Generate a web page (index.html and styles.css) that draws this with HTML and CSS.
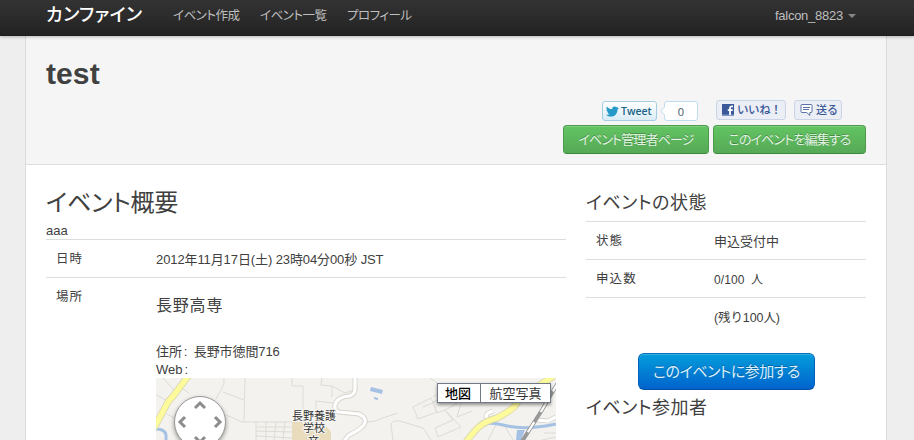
FILE: index.html
```html
<!DOCTYPE html>
<html lang="ja">
<head>
<meta charset="utf-8">
<title>カンファイン</title>
<link rel="stylesheet" href="styles.css">
</head>
<body>
<nav class="navbar">
  <a class="brand">カンファイン</a>
  <a class="nav-link nav-create">イベント作成</a>
  <a class="nav-link nav-list">イベント一覧</a>
  <a class="nav-link nav-profile">プロフィール</a>
  <a class="nav-user">falcon_8823<span class="caret"></span></a>
</nav>
<div class="content">
  <header class="page-header">
    <h1>test</h1>
    <div class="social">
      <a class="tweet">
        <svg width="13" height="11" viewBox="0 0 13 11"><path fill="#2599c8" d="M0 8.7C2 9 3 8.600 3.700 8 2.300 7.900 1.600 7 1.500 6.200h1C1 5.700.4 4.700.4 3.500l1.100.3C.3 2.800.3 1.500.9.500 2.300 2.200 4 3.200 6.200 3.300 5.900 1.600 7 .4 8.500.4c.8 0 1.500.3 2 .9l1.700-.6-.9 1.400 1.700-.2-1.500 1.500C11.500 8 8.500 10.600 4.700 10.600 3 10.600 1.300 10 0 8.700z"/></svg>
        <span>Tweet</span>
      </a>
      <span class="count"><svg class="count-tip" width="5" height="10" viewBox="0 0 5 10"><path d="M5 .5.7 5 5 9.500" fill="#fff" stroke="#bddcee"/></svg>0</span>
      <a class="fb like">
        <svg width="12" height="12" viewBox="0 0 12 12"><path fill="#3b5998" d="M0 0h12v12H0z"/><path fill="#8298c7" d="M0 10.500h12V12H0z"/><path fill="none" stroke="#fff" stroke-width="1.800" d="M11 2.400h-1Q8 2.200 8 4.600V11M5.800 6.200h5"/></svg>
        <span>いいね！</span>
      </a>
      <a class="fb send">
        <svg width="13" height="13" viewBox="0 0 13 13"><path fill="#fff" stroke="#5872a7" d="M2 .5h9q1 0 1 1v6q0 1-1 1h-1.200v3L6.700 8.500H2q-1 0-1-1v-6q0-1 1-1z"/><path stroke="#5872a7" d="M3 3.500h7M3 5.500h6"/></svg>
        <span>送る</span>
      </a>
    </div>
    <div class="actions">
      <a class="btn btn-admin">イベント管理者ページ</a>
      <a class="btn btn-edit">このイベントを編集する</a>
    </div>
  </header>
  <div class="columns">
    <main class="main">
      <h2>イベント概要</h2>
      <p class="summary">aaa</p>
      <div class="row">
        <div class="label">日時</div>
        <div class="value date">2012年11月17日(土) 23時04分00秒 JST</div>
      </div>
      <div class="row row-place">
        <div class="label">場所</div>
        <div class="place">
          <h4>長野高専</h4>
          <p class="address">住所<i>:</i>長野市徳間716</p>
          <p class="web">Web<i>:</i></p>
          <div class="map">
            <svg width="400" height="150" viewBox="0 0 400 150">
              <path fill="#f3f2ee" d="M0 0h400v150H0z"/>
              <g fill="none" stroke="#dddbd5">
                <path d="M7 0 18 12l1 4M0 17l10 5M24 9l9 6M11 36l7 4M68 0v6l-8 15M67 14l21 8M89 0l-1 44M70 37l16 7h50M136 0v8h11v24M166 0l-1 7 11 1 13 7 9-3M176 8v11M160 33V23l18 2"/>
                <path d="M100 44v18M110 44v18M120 44l-2 18M129 44l-2 18M100 49h36M100 53l36 1M100 58l36 2"/>
                <path d="M211 44q8 0 16-4l15-5M237 62l-2-15q0-5 9-4l23 7 8 12M257 29l18-9 6 14-19 7zM277 19l18-10 11 7-4 9-13 7 16 17-23 10-3-9 18-8-8-10-8 3-4-11 18-8M309 12l-8 27 15-6M340 47l-8 15M348 47l9 15M274 0l7 5M386 62l14-3M388 55h12M267 29l12-5"/>
              </g>
              <path fill="#e8dcbc" d="M136 44h25l4 5h6l4 5v8h-39z"/>
              <path fill="none" stroke="#d5d3cd" stroke-width="5" d="M199-1v13q-1 5-6 6-12 1-14 9-1 6 4 7l20 2q10 5 4 12-5 5-14 9l-5 6M331 42q-2-5 1-7l5-2M381 42l11 1 8-4"/>
              <path fill="none" stroke="#fff" stroke-width="3.200" d="M199-1v13q-1 5-6 6-12 1-14 9-1 6 4 7l20 2q10 5 4 12-5 5-14 9l-5 6M331 42q-2-5 1-7l5-2M381 42l11 1 8-4"/>
              <path fill="#a5c1e3" d="m215 9 12 3-1 4-12-3zM218 19l4 1v2l-4-1zM361 52h8l-4 10h-5z"/>
              <path fill="none" stroke="#a5c1e3" stroke-width="3" d="M0 51q9 0 10 6v6M322 48q10-5 25-1t34 2q11-1 19-3"/>
              <path fill="none" stroke="#d9d6b2" stroke-width="7" d="M33-3 18 17l-6 7-14 26M310 64q8-11 14-16t17-8q12-6 18-12 6-11 15-15L398-2"/>
              <path fill="none" stroke="#fdfa9c" stroke-width="5.400" d="M33-3 18 17l-6 7-14 26M310 64q8-11 14-16t17-8q12-6 18-12 6-11 15-15L398-2"/>
              <path fill="none" stroke="#999" stroke-width="4" d="m403 3-17 29-21 33"/>
              <path fill="none" stroke="#fff" stroke-width="2.200" stroke-dasharray="12 12" d="m403 3-17 29-21 33"/>
              <g class="map-text"><text x="136" y="42">長野養護</text><text x="147" y="54">学校</text><text x="152" y="67">文</text></g>
            </svg>
            <svg class="pan" width="58" height="60" viewBox="0 0 58 60">
              <circle cx="29" cy="29" r="25.500" fill="#fff" stroke="#999"/>
              <path fill="none" stroke="#8d8d8d" stroke-width="3" d="m24 15 5-5 5 5M14 24l-5 5 5 5M44 24l5 5-5 5M24 44l5 5 5-5"/>
            </svg>
            <div class="map-type"><span class="active">地図</span><span>航空写真</span></div>
          </div>
        </div>
      </div>
    </main>
    <aside class="side">
      <h3>イベントの状態</h3>
      <div class="row"><div class="label">状態</div><div class="value">申込受付中</div></div>
      <div class="row"><div class="label count-label">申込数</div><div class="value seats">0/100 人</div></div>
      <div class="row"><div class="label"></div><div class="value rest">(残り100人)</div></div>
      <a class="join">このイベントに参加する</a>
      <h3 class="members">イベント参加者</h3>
    </aside>
  </div>
</div>
</body>
</html>
```
FILE: styles.css
```css
* { box-sizing: border-box; }
html, body { height: 100%; overflow: hidden; }
body {
  margin: 0;
  background: #eee;
  color: #404040;
  font: 13px/18px "Liberation Sans", "Noto Sans CJK JP", sans-serif;
}
h1, h2, h3, h4, p { margin: 0; }
a, span, h2, h3, .label, .value { white-space: nowrap; }
svg { display: block; flex: none; }

.navbar {
  position: relative;
  z-index: 1;
  display: flex;
  height: 36px;
  padding: 0 58px 0 46px;
  background: linear-gradient(#333, #222);
  box-shadow: 0 1px 3px rgba(0, 0, 0, .25), inset 0 -1px 0 rgba(0, 0, 0, .1);
  color: #bfbfbf;
  line-height: 31px;
  font-feature-settings: "palt";
}
.brand { width: 127px; color: #fff; font-size: 18px; line-height: 31px; font-weight: 500; letter-spacing: .5px; }
.nav-link { width: 87px; font-size: 12.500px; line-height: 33px; letter-spacing: -.5px; }
.nav-user { display: flex; margin-left: auto; letter-spacing: -.25px; }
.caret {
  margin: 14px 0 0 5px;
  height: 4px;
  border: 4px solid transparent;
  border-top-color: #858585;
  border-bottom: 0;
}

.content {
  width: 862px;
  height: 404px;
  margin-left: 25px;
  overflow: hidden;
  background: #fff;
  border: solid #ddd;
  border-width: 0 1px;
}
.page-header {
  height: 129px;
  padding: 20px 20px 0;
  background: #f5f5f5;
  border-bottom: 1px solid #ddd;
}
h1 { height: 44px; font-size: 30px; line-height: 36px; letter-spacing: .1px; }
.social { display: flex; height: 25px; padding-left: 556px; }
.tweet {
  display: flex;
  align-items: center;
  gap: 2px;
  width: 55px;
  height: 20px;
  margin-top: 1px;
  padding-left: 3px;
  border: 1px solid #a6cee3;
  border-radius: 3px;
  background: linear-gradient(#fff, #dbecf5);
  color: #186487;
  font: 600 10.500px/18px "Open Sans", sans-serif;
}
.count {
  position: relative;
  width: 34px;
  height: 20px;
  margin: 1px 0 0 7px;
  border: 1px solid #bddcee;
  border-radius: 3px;
  background: #fff;
  color: #456;
  font: 11px/19px "Open Sans", sans-serif;
  text-align: center;
}
.count-tip { position: absolute; left: -5px; top: 4px; }
.fb {
  display: flex;
  align-items: center;
  height: 20px;
  border: 1px solid #cad4e7;
  border-radius: 3px;
  background: #eceef5;
  color: #3b5998;
  font-weight: 500;
}
.like { width: 70px; margin-left: 18px; padding-left: 5px; gap: 3px; font-size: 11.500px; }
.like span { letter-spacing: -.4px; }
.send { width: 48px; margin-left: 8px; padding-left: 5px; gap: 3px; font-size: 11px; }
.actions { display: flex; justify-content: flex-end; gap: 4px; }
.btn {
  height: 29px;
  border: 1px solid #4b9b4b;
  border-bottom-color: #3c8a3c;
  border-radius: 4px;
  background: linear-gradient(#62c462, #57a957);
  box-shadow: inset 0 1px 0 rgba(255, 255, 255, .2);
  color: #e1f3e1;
  font-feature-settings: "palt";
  letter-spacing: -.85px;
  line-height: 28px;
  text-align: center;
  text-shadow: 0 -1px 0 rgba(0, 0, 0, .25);
}
.btn-admin { width: 146px; }
.btn-edit { width: 153px; }

.columns { display: flex; gap: 20px; padding: 20px 20px 0; }
.main { width: 520px; }
h2 { height: 37px; font-size: 24px; line-height: 36px; font-weight: 400; letter-spacing: -.2px; font-feature-settings: "palt"; }
.summary { height: 17px; line-height: 17px; }
.row { display: flex; height: 38px; padding: 10px 10px 0; border-top: 1px solid #ddd; }
.label { width: 100px; font-size: 12.500px; line-height: 19px; font-weight: 400; letter-spacing: 1.100px; }
.value { line-height: 19px; }
.date { letter-spacing: -.1px; }
.row-place { height: 240px; }
.place { width: 400px; flex: none; }
h4 { height: 55px; font-size: 16px; line-height: 36px; font-weight: 400; letter-spacing: .8px; }
.address i, .web i { font-style: normal; display: inline-block; width: 12px; padding-left: 2px; }
.address { letter-spacing: -.1px; }
.web { height: 17px; }
.map { position: relative; width: 400px; height: 150px; overflow: hidden; }
.map-text { font-size: 11px; fill: #333; stroke: #f8f7f4; stroke-width: 2px; paint-order: stroke; }
.pan { position: absolute; left: 15px; top: 15px; filter: drop-shadow(0 2px 2px rgba(0, 0, 0, .4)); }
.map-type {
  position: absolute;
  left: 281px;
  top: 5px;
  display: flex;
  width: 114px;
  height: 20px;
  border: 1px solid #717b87;
  background: #fff;
  box-shadow: 0 2px 3px rgba(0, 0, 0, .4);
  color: #333;
  line-height: 19px;
  text-align: center;
}
.map-type span { flex: 1; }
.map-type .active { flex: none; width: 43px; padding-right: 2px; border-right: 1px solid #717b87; color: #000; font-weight: 500; }

.side { width: 280px; }
h3 { height: 36px; font-size: 18px; line-height: 36px; font-weight: 400; letter-spacing: .5px; font-feature-settings: "palt"; }
.side .label { width: 118px; }
.seats { font-size: 12px; line-height: 20px; word-spacing: 3px; letter-spacing: .1px; }
.rest { font-size: 12.500px; line-height: 21px; letter-spacing: -.1px; }
.join {
  display: block;
  width: 177px;
  height: 37px;
  margin: 18px 0 0 52px;
  border: 1px solid #0064cd;
  border-color: #0370b8 #0060bd #004da2;
  border-radius: 6px;
  background: linear-gradient(#049cdb, #0064cd);
  box-shadow: inset 0 1px 0 rgba(255, 255, 255, .2);
  color: #d9eefb;
  font-size: 15px;
  font-feature-settings: "palt";
  letter-spacing: -.5px;
  line-height: 36px;
  text-align: center;
  text-shadow: 0 -1px 0 rgba(0, 0, 0, .25);
}
```
